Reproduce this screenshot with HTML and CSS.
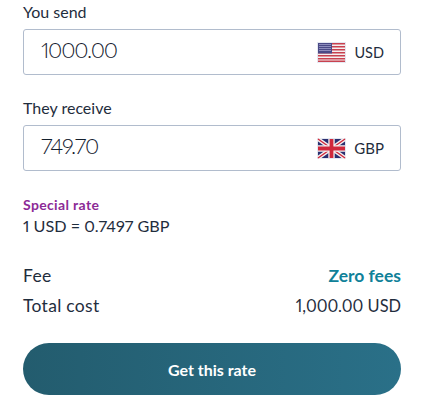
FILE: index.html
```html
<!DOCTYPE html>
<html lang="en">
<head>
<meta charset="utf-8">
<title>Get this rate</title>
<link rel="stylesheet" href="styles.css">
</head>
<body>
<main class="form">
  <div class="field">
    <label class="label">You send</label>
    <div class="box">
      <span class="amount">1000.00</span>
      <span class="currency">
        <svg class="flag" viewBox="0 0 29 21" width="29" height="21">
          <rect width="29" height="21" fill="#e4e8f2"/>
          <rect x="1" y="1" width="27" height="19" fill="#f4f0f0"/>
          <g fill="#c8414f">
            <rect x="1" y="1" width="27" height="1.5"/>
            <rect x="1" y="4" width="27" height="1.5"/>
            <rect x="1" y="7" width="27" height="1.5"/>
            <rect x="1" y="10" width="27" height="1.5"/>
            <rect x="1" y="13" width="27" height="1.5"/>
            <rect x="1" y="16" width="27" height="1.5"/>
            <rect x="1" y="18.5" width="27" height="1.5"/>
          </g>
          <rect x="1" y="1" width="14" height="10.5" fill="#4a4a86"/>
          <g fill="#8c8cbc">
            <rect x="2" y="2" width="12" height="1"/>
            <rect x="2" y="4" width="12" height="1"/>
            <rect x="2" y="6" width="12" height="1"/>
            <rect x="2" y="8" width="12" height="1"/>
          </g>
        </svg>
        <span class="code code-usd">USD</span>
      </span>
    </div>
  </div>
  <div class="field">
    <label class="label">They receive</label>
    <div class="box">
      <span class="amount">749.70</span>
      <span class="currency">
        <svg class="flag" viewBox="0 0 29 21" width="29" height="21">
          <rect width="29" height="21" fill="#e4e8f2"/>
          <rect x="1" y="1" width="27" height="19" fill="#2a2f70"/>
          <path d="M1 1 28 20M28 1 1 20" stroke="#f4f0f0" stroke-width="4"/>
          <path d="M1 1 28 20M28 1 1 20" stroke="#d0283c" stroke-width="1.4"/>
          <path d="M14.5 1V20M1 10.5H28" stroke="#f4f0f0" stroke-width="6.4"/>
          <path d="M14.5 1V20M1 10.5H28" stroke="#d0283c" stroke-width="3.8"/>
        </svg>
        <span class="code">GBP</span>
      </span>
    </div>
  </div>
  <div class="rate">
    <div class="special">Special rate</div>
    <div class="rate-value">1 USD = 0.7497 GBP</div>
  </div>
  <div class="costs">
    <div class="row"><span class="cost-label">Fee</span><span class="zero">Zero fees</span></div>
    <div class="row"><span class="cost-label">Total cost</span><span class="total">1,000.00 USD</span></div>
  </div>
  <button class="cta" type="button">Get this rate</button>
</main>
</body>
</html>
```
FILE: styles.css
```css
html, body {
  margin: 0;
  padding: 0;
  background: #fff;
}
body {
  width: 422px;
  height: 415px;
  overflow: hidden;
  font-family: "Lato", "Noto Sans", sans-serif;
  color: #1f2d3d;
  font-variant-numeric: proportional-nums;
}
.form {
  display: flex;
  flex-direction: column;
  padding: 2px 21px 0 23px;
}
.field {
  display: flex;
  flex-direction: column;
  margin-bottom: 23px;
}
.field + .field {
  margin-bottom: 0;
}
.label {
  font-size: 16px;
  line-height: 20px;
  margin-bottom: 7px;
}
.box {
  box-sizing: border-box;
  height: 46px;
  border: 1px solid #b1bccd;
  border-radius: 3px;
  display: flex;
  align-items: center;
  justify-content: space-between;
  padding: 0 16px 0 17px;
}
.amount {
  font-size: 22px;
  font-weight: 300;
  letter-spacing: -1.2px;
  line-height: 26px;
  padding-bottom: 4px;
  color: #14202e;
}
.currency {
  display: flex;
  align-items: center;
  gap: 8px;
}
.code {
  font-size: 15px;
}
.code-usd {
  font-size: 14.5px;
}
.flag {
  display: block;
}
.rate {
  margin-top: 26px;
}
.special {
  font-size: 14px;
  line-height: 16px;
  font-weight: 700;
  letter-spacing: 0.35px;
  color: #8c2a96;
}
.rate-value {
  margin-top: 2px;
  font-size: 16.2px;
  line-height: 22px;
}
.costs {
  margin-top: 29px;
  display: flex;
  flex-direction: column;
  gap: 10px;
}
.row {
  display: flex;
  justify-content: space-between;
  font-size: 17.5px;
  line-height: 20px;
}
.cost-label {
  letter-spacing: 0.3px;
}
.zero {
  font-weight: 700;
  color: #0f8199;
}
.total {
  font-size: 16.4px;
}
.cta {
  margin-top: 27px;
  height: 52px;
  border: 0;
  border-radius: 26px;
  background: linear-gradient(90deg, #235c6e, #2a7088);
  color: #fff;
  font-family: inherit;
  font-size: 16px;
  font-weight: 700;
}
```
